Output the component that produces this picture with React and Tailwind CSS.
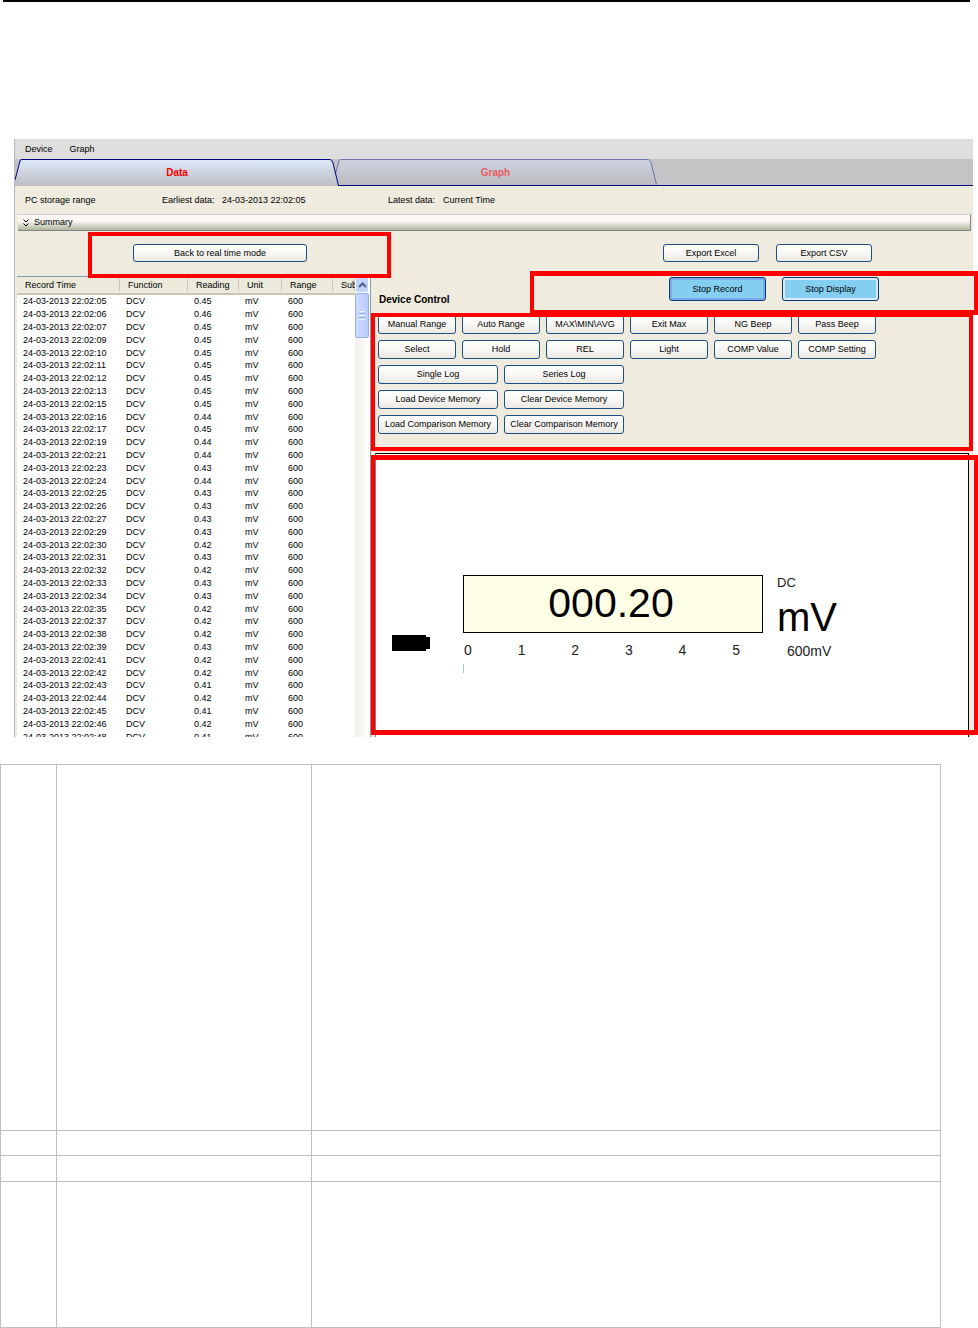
import React, { useState } from "react";

const readings = [
  ["05", "0.45"], ["06", "0.46"], ["07", "0.45"], ["09", "0.45"], ["10", "0.45"],
  ["11", "0.45"], ["12", "0.45"], ["13", "0.45"], ["15", "0.45"], ["16", "0.44"],
  ["17", "0.45"], ["19", "0.44"], ["21", "0.44"], ["23", "0.43"], ["24", "0.44"],
  ["25", "0.43"], ["26", "0.43"], ["27", "0.43"], ["29", "0.43"], ["30", "0.42"],
  ["31", "0.43"], ["32", "0.42"], ["33", "0.43"], ["34", "0.43"], ["35", "0.42"],
  ["37", "0.42"], ["38", "0.42"], ["39", "0.43"], ["41", "0.42"], ["42", "0.42"],
  ["43", "0.41"], ["44", "0.42"], ["45", "0.41"], ["46", "0.42"], ["48", "0.41"],
];

const shortControls = [
  "Manual Range", "Auto Range", "MAX\\MIN\\AVG", "Exit Max", "NG Beep", "Pass Beep",
  "Select", "Hold", "REL", "Light", "COMP Value", "COMP Setting",
];

const longControls = [
  "Single Log", "Series Log",
  "Load Device Memory", "Clear Device Memory",
  "Load Comparison Memory", "Clear Comparison Memory",
];

const XpButton = ({ children, className = "h-[19px]" }) => (
  <button
    type="button"
    className={`flex items-center justify-center whitespace-nowrap rounded-[3px] border border-[#1c4f82] bg-linear-to-b from-white via-[#f8f7f4] to-[#ebe8e2] pt-px ${className}`}
  >
    {children}
  </button>
);

const StopButton = ({ children, ring }) => (
  <button
    type="button"
    className={`flex h-6 w-[97px] items-center justify-center rounded-[3px] border border-[#003c74] bg-[#84cff0] pt-px inset-ring-2 ${ring}`}
  >
    {children}
  </button>
);

// Red call-out frame drawn over a section
const Highlight = ({ className }) => (
  <div className={`pointer-events-none absolute border-x-4 border-[#ff0000] ${className}`} />
);

const Tab = ({ label, active, onClick, className }) => (
  <button
    type="button"
    onClick={onClick}
    className={`relative flex h-[27px] shrink-0 items-center justify-center text-[10px] font-bold ${
      active ? "z-10" : "border-b border-[#00007f]"
    } ${className}`}
  >
    <svg className="absolute inset-0 h-full w-full" viewBox="0 0 324 27" preserveAspectRatio="none">
      <defs>
        <linearGradient id={`tab-${label}`} x1="0" y1="0" x2="0" y2="1">
          <stop offset="0" stopColor={active ? "#dce9fa" : "#ccd3e0"} />
          <stop offset="1" stopColor={active ? "#bebdc2" : "#bdbcc0"} />
        </linearGradient>
      </defs>
      <path
        d="M0 27 L0 21 L5 2 Q5 0.5 7 0.5 L315 0.5 Q317 0.5 318 4 L323 26 L323 27 Z"
        fill={`url(#tab-${label})`}
      />
      <path
        d="M0 21 L5 2 Q5 0.5 7 0.5 L315 0.5 Q317 0.5 318 4 L323.5 26.5"
        fill="none"
        stroke={active ? "#00007f" : "#6a70b0"}
      />
    </svg>
    <span className={`relative ${active ? "text-[#ff0000]" : "text-[#e85c62]"}`}>{label}</span>
  </button>
);

const RecordTable = () => (
  <div className="flex h-[461px] border-t border-r border-[#7f9db9] bg-white">
    <div className="min-w-0 flex-1 overflow-hidden">
      <table className="h-[466px] w-full table-fixed border-collapse text-left">
        <colgroup>
          <col className="w-[103px]" />
          <col className="w-[68px]" />
          <col className="w-[51px]" />
          <col className="w-[43px]" />
          <col className="w-[51px]" />
          <col />
        </colgroup>
        <thead>
          <tr className="h-[17px] border-b-2 border-[#cbc7b8] bg-[#ebeadb]">
            {["Record Time", "Function", "Reading", "Unit", "Range", "Sub"].map((h) => (
              <th key={h} className="p-0 font-normal whitespace-nowrap">
                <div className="border-r border-[#c7c5b2] pl-2 leading-3">{h}</div>
              </th>
            ))}
          </tr>
        </thead>
        <tbody>
          {readings.map(([sec, value]) => (
            <tr key={sec}>
              <td className="p-0 pl-[6px] leading-3 whitespace-nowrap">24-03-2013 22:02:{sec}</td>
              <td className="p-0 pl-[6px] leading-3">DCV</td>
              <td className="p-0 pl-[6px] leading-3">{value}</td>
              <td className="p-0 pl-[6px] leading-3">mV</td>
              <td className="p-0 pl-[6px] leading-3">600</td>
              <td className="p-0" />
            </tr>
          ))}
        </tbody>
      </table>
    </div>
    <div className="flex w-[15px] shrink-0 flex-col bg-linear-to-r from-[#f2f0ea] to-white pr-px">
      <button
        type="button"
        aria-label="Scroll up"
        className="flex h-4 items-center justify-center rounded-[2px] border border-white bg-[#c3d3fb]"
      >
        <svg width="9" height="6" viewBox="0 0 9 6" fill="none" stroke="#4d6185" strokeWidth="2">
          <path d="M1 5 L4.5 1.5 L8 5" />
        </svg>
      </button>
      <div className="flex h-[45px] flex-col items-center justify-center gap-px rounded-[2px] border border-[#98b1e4] bg-linear-to-r from-[#cddbff] to-[#b9cbf9]">
        <div className="h-px w-[6px] bg-[#eef4fe]" />
        <div className="h-px w-[6px] bg-[#8cb0f8]" />
        <div className="h-px w-[6px] bg-[#eef4fe]" />
        <div className="h-px w-[6px] bg-[#8cb0f8]" />
        <div className="h-px w-[6px] bg-[#eef4fe]" />
      </div>
    </div>
  </div>
);

const Meter = () => (
  <div className="flex h-[284px] border-t border-r border-l border-t-black border-r-black border-l-[#808080] bg-white pt-[121px] pl-4">
    <svg className="mt-[60px] shrink-0" width="38" height="16" viewBox="0 0 38 16">
      <path d="M0 0 H34 V2 H38 V14 H34 V16 H0 Z" fill="#000" />
    </svg>
    <div className="ml-[33px] w-[300px] shrink-0">
      <div className="flex h-[58px] items-center justify-center border border-black bg-[#ffffe6] pr-1 text-[41px]">
        000.20
      </div>
      <div className="mt-[10px] flex w-[277px] justify-between pl-px text-[14px] leading-[14px] text-[#222]">
        {[0, 1, 2, 3, 4, 5].map((n) => (
          <span key={n}>{n}</span>
        ))}
      </div>
      <div className="mt-[7px] h-[9px] w-px bg-[#9fc3f5]" />
    </div>
    <div className="ml-[14px]">
      <p className="text-[13px] leading-4 text-[#222]">DC</p>
      <p className="mt-[6px] text-[40px] leading-10">mV</p>
      <p className="mt-[6px] ml-[10px] text-[14px] leading-4 text-[#222]">600mV</p>
    </div>
  </div>
);

const DataView = () => (
  <div className="flex">
    <div className="w-[356px] shrink-0 pl-[2px]">
      <div className="relative flex h-[45px] items-start justify-center pt-[13px] pl-[52px]">
        <XpButton className="h-[18px] w-[174px]">Back to real time mode</XpButton>
        <Highlight className="top-px -right-5 -bottom-[2px] left-[71px] z-10 border-y-4" />
      </div>
      <RecordTable />
    </div>

    <div className="min-w-0 flex-1">
      <div className="flex justify-end gap-[17px] pt-[13px] pr-[101px]">
        <XpButton className="h-[18px] w-24">Export Excel</XpButton>
        <XpButton className="h-[18px] w-24">Export CSV</XpButton>
      </div>

      <div className="mt-[9px] flex h-11 items-start">
        <h2 className="w-[159px] shrink-0 pt-[23px] pl-2 text-[10px] leading-3 font-bold">
          Device Control
        </h2>
        <div className="relative flex h-full flex-1 items-start justify-end gap-4 pt-[6px] pr-[94px]">
          <StopButton ring="inset-ring-[#7fa8ea]">Stop Record</StopButton>
          <StopButton ring="inset-ring-[#dcebf5]">Stop Display</StopButton>
          <Highlight className="inset-y-0 -right-[5px] left-0 border-y-[5px]" />
        </div>
      </div>

      <div className="relative -mt-[2px] h-[138px] pt-[2px] pl-[7px]">
        <div className="grid grid-cols-[repeat(6,78px)] gap-[6px]">
          {shortControls.map((label) => (
            <XpButton key={label}>{label}</XpButton>
          ))}
        </div>
        <div className="mt-[6px] grid grid-cols-[repeat(2,120px)] gap-[6px]">
          {longControls.map((label) => (
            <XpButton key={label}>{label}</XpButton>
          ))}
        </div>
        <Highlight className="inset-0 border-y-4" />
      </div>

      <div className="relative px-1 pt-[2px]">
        <Meter />
        <Highlight className="top-1 -right-[5px] bottom-[2px] left-0 border-y-[5px]" />
      </div>
    </div>
  </div>
);

const ManualTable = () => (
  <div className="mt-[27px] pr-[37px]">
    <table className="w-full table-fixed border-collapse">
      <colgroup>
        <col className="w-14" />
        <col className="w-[255px]" />
        <col />
      </colgroup>
      <tbody>
        {["h-[366px]", "h-[25px]", "h-[26px]", "h-[146px]"].map((height) => (
          <tr key={height} className={height}>
            <td className="border border-[#bfbfbf] p-0" />
            <td className="border border-[#bfbfbf] p-0" />
            <td className="border border-[#bfbfbf] p-0" />
          </tr>
        ))}
      </tbody>
    </table>
  </div>
);

const App = () => {
  const [tab, setTab] = useState("Data");

  return (
    <div className="overflow-hidden bg-white font-['Liberation_Sans',Arial,sans-serif] text-[9px] text-black">
      <header className="mr-2 ml-[3px] h-[2px] bg-black" />

      <main className="mt-[137px] mr-[5px] ml-[14px] border-l border-[#b4b8bc] bg-[#efebde]">
        <nav className="flex h-5 items-center gap-[17px] bg-[#dedede] pt-px pl-[10px]">
          <button type="button">Device</button>
          <button type="button">Graph</button>
        </nav>

        <div className="flex h-[27px] bg-[#c5c3c6] shadow-[inset_0_-1px_0_#00007f]">
          <Tab
            label="Data"
            active={tab === "Data"}
            onClick={() => setTab("Data")}
            className="w-[324px]"
          />
          <Tab
            label="Graph"
            active={tab === "Graph"}
            onClick={() => setTab("Graph")}
            className="-ml-[5px] w-[323px]"
          />
        </div>

        <div className="flex h-7 items-center pt-px pl-[10px]">
          <span className="w-[137px]">PC storage range</span>
          <span className="w-[60px]">Earliest data:</span>
          <span className="w-[166px]">24-03-2013 22:02:05</span>
          <span className="w-[55px]">Latest data:</span>
          <span>Current Time</span>
        </div>

        <button
          type="button"
          className="mr-[2px] ml-[3px] flex h-[17px] w-[calc(100%-5px)] items-center gap-[5px] border-t border-r border-b border-t-[#d0d0d0] border-r-[#848284] border-b-[#848284] bg-linear-to-b from-[#faf7f4] from-40% to-[#b0b89e] pl-[5px]"
        >
          <svg width="6" height="8" viewBox="0 0 6 8" fill="none" stroke="#000">
            <path d="M0.5 0.5 L3 3 L5.5 0.5 M0.5 4.5 L3 7 L5.5 4.5" />
          </svg>
          Summary
        </button>

        <DataView />
      </main>

      <ManualTable />
    </div>
  );
};

export default App;
